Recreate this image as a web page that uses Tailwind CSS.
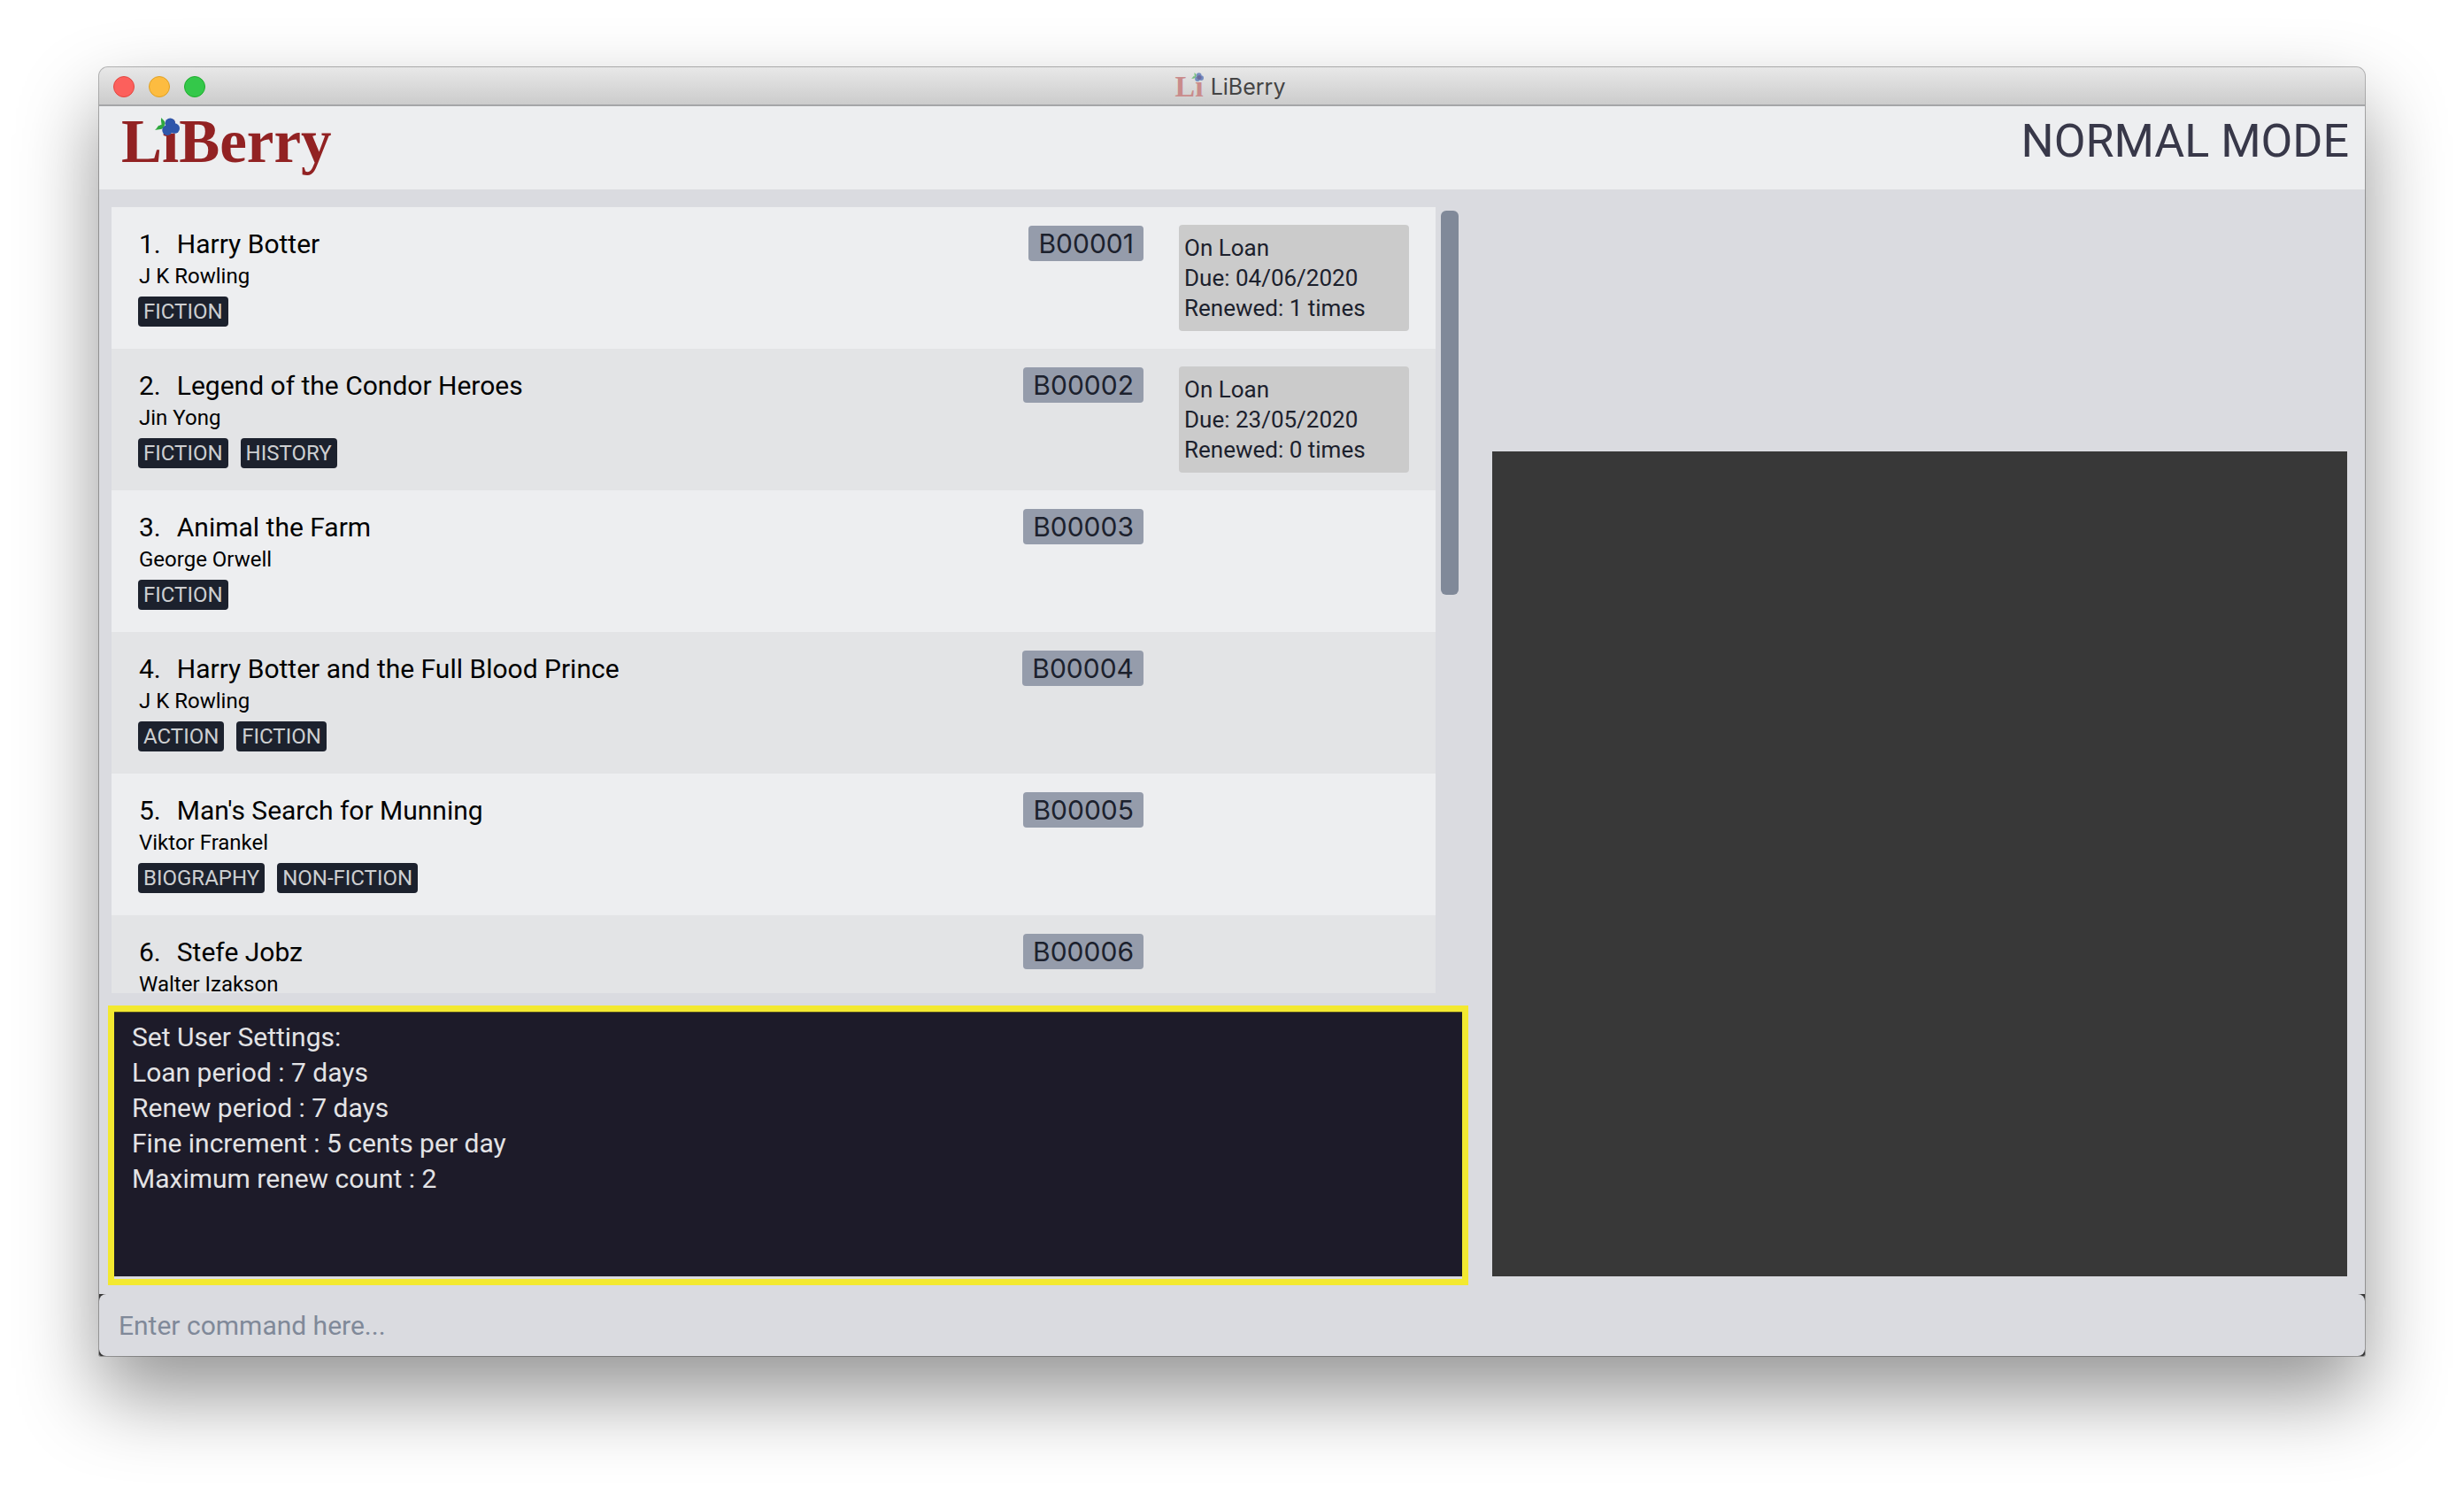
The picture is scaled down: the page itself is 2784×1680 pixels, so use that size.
<!DOCTYPE html>
<html lang="en">
<head>
<meta charset="utf-8">
<title>LiBerry</title>
<script src="https://cdn.jsdelivr.net/npm/@tailwindcss/browser@4"></script>
</head>
<body class="bg-white font-['Roboto',sans-serif] text-black">
<svg class="hidden" aria-hidden="true">
  <symbol id="berries" viewBox="0 0 68 48">
    <path d="M18 0c3 5 9 8 10 14 0 7-5 16-12 17-6 1-12 2-16 2 6-4 7-9 11-12 2-1 6 0 7-2 1-6-3-11 0-19z" fill="#2fa83f"/>
    <circle cx="42" cy="15" r="14" fill="#2f57ab"/><circle cx="54" cy="29" r="14" fill="#2f57ab"/><circle cx="34" cy="34" r="14" fill="#2f57ab"/>
  </symbol>
</svg>
<div class="flex h-screen flex-col px-28 pt-[76px] pb-[148px]">
  <div class="flex min-h-0 flex-1 flex-col overflow-hidden rounded-t-[10px] rounded-b-xs bg-[#dadbe0] shadow-[0_0_0_1px_rgba(0,0,0,0.28),0_44px_90px_rgba(0,0,0,0.42)]">

    <!-- Title bar -->
    <div class="grid h-11 shrink-0 grid-cols-[1fr_auto_1fr] items-center border-b-2 border-[#a5a6a8] bg-linear-to-b from-[#e8e8e8] to-[#cccccc] px-4 pt-[2px]">
      <div class="flex gap-4">
        <button aria-label="Close" class="size-6 rounded-full border border-[#e2463f] bg-[#fc605c]"></button>
        <button aria-label="Minimize" class="size-6 rounded-full border border-[#dfa023] bg-[#fdbc40]"></button>
        <button aria-label="Zoom" class="size-6 rounded-full border border-[#1eac2c] bg-[#34c84a]"></button>
      </div>
      <div class="flex items-center gap-2 pr-1">
        <span class="relative font-['Liberation_Serif',serif] text-[34px] leading-8 font-bold text-[#c98b8b]" aria-hidden="true">Li<svg class="absolute top-0 right-0 h-[10px] w-[14px]"><use href="#berries" opacity="0.6"/></svg></span>
        <span class="font-['Inter',sans-serif] text-[25px] leading-8 text-[#444444]">LiBerry</span>
      </div>
    </div>

    <!-- Header -->
    <header class="flex h-[94px] shrink-0 items-start justify-between bg-[#edeef0] pr-[18px] pl-5 pt-2">
      <h1 class="relative pl-[5px] font-['Liberation_Serif',serif] text-[69px] leading-16 font-bold text-[#922223]">LiBerry<svg class="absolute top-[5px] left-[43px] h-5 w-7" aria-hidden="true"><use href="#berries"/></svg></h1>
      <div class="pt-[2px] text-[52px] leading-[60px] text-[#383849]">NORMAL MODE</div>
    </header>

    <main class="grid min-h-0 flex-1 grid-cols-[1537fr_966fr] gap-x-[27px] pt-5 pr-5 pb-[10px] pl-[10px]">
      <div class="flex min-h-0 flex-col gap-[14px]">
        <div class="flex min-h-0 flex-1 gap-[6px] pr-[11px] pl-1">
          <ol id="books" class="min-h-0 flex-1 overflow-hidden"></ol>
          <div class="w-5 pt-1"><div class="h-[434px] rounded-md bg-[#808999]"></div></div>
        </div>
        <div class="h-[316px] shrink-0 border-7 border-[#f3e930] pb-[3px]">
          <div class="h-full bg-[#1d1b29] px-5 pt-[9px] text-[30px] leading-10 text-[#e3e3e5] shadow-[inset_0_1px_0_#55501f]">
            <p>Set User Settings:</p>
            <p>Loan period : 7 days</p>
            <p>Renew period : 7 days</p>
            <p>Fine increment : 5 cents per day</p>
            <p>Maximum renew count : 2</p>
          </div>
        </div>
      </div>
      <section class="mt-[276px] mb-[10px] bg-[#383838]" aria-label="Details"></section>
    </main>

    <!-- Command box -->
    <div class="h-[70px] shrink-0 bg-[#383838]">
      <input type="text" aria-label="Command" placeholder="Enter command here..." class="block h-full w-full rounded-lg bg-[#dadbe0] px-[22px] text-[30px] text-[#383849] placeholder-[#808999] outline-none">
    </div>
  </div>
</div>
<script>
const books = [
  ['Harry Botter', 'J K Rowling', ['FICTION'], 'B00001', ['04/06/2020', 1]],
  ['Legend of the Condor Heroes', 'Jin Yong', ['FICTION', 'HISTORY'], 'B00002', ['23/05/2020', 0]],
  ['Animal the Farm', 'George Orwell', ['FICTION'], 'B00003'],
  ['Harry Botter and the Full Blood Prince', 'J K Rowling', ['ACTION', 'FICTION'], 'B00004'],
  ["Man's Search for Munning", 'Viktor Frankel', ['BIOGRAPHY', 'NON-FICTION'], 'B00005'],
  ['Stefe Jobz', 'Walter Izakson', [], 'B00006'],
];
document.getElementById('books').innerHTML = books.map(([title, author, tags, code, loan], i) => `
  <li class="flex h-40 items-start bg-[#edeef0] pr-[30px] pl-[31px] even:bg-[#e3e4e6]">
    <div class="min-w-0 flex-1 pt-[22px]">
      <h2 class="flex gap-[18px] text-[30px] leading-10"><span>${i + 1}.</span><span>${title}</span></h2>
      <p class="text-[24px] leading-8">${author}</p>
      <div class="mt-[7px] -ml-px flex gap-[14px]">${tags.map(t => `<span class="h-[34px] rounded-sm bg-[#1c212d] px-[6px] text-[24px] leading-[34px] text-[#cdcfd1]">${t}</span>`).join('')}</div>
    </div>
    <span class="mt-[21px] h-10 rounded-sm bg-[#959cab] px-[11px] font-['Inter',sans-serif] text-[30px] leading-10 text-[#1c212d]">${code}</span>
    <div class="ml-10 w-[260px]">${loan ? `<div class="mt-5 h-[120px] rounded-sm bg-[#cbcbcb] px-[6px] pt-[9px] text-[26px] leading-[34px] text-[#1c212d]"><p>On Loan</p><p>Due: ${loan[0]}</p><p>Renewed: ${loan[1]} times</p></div>` : ''}</div>
  </li>`).join('');
</script>
</body>
</html>
